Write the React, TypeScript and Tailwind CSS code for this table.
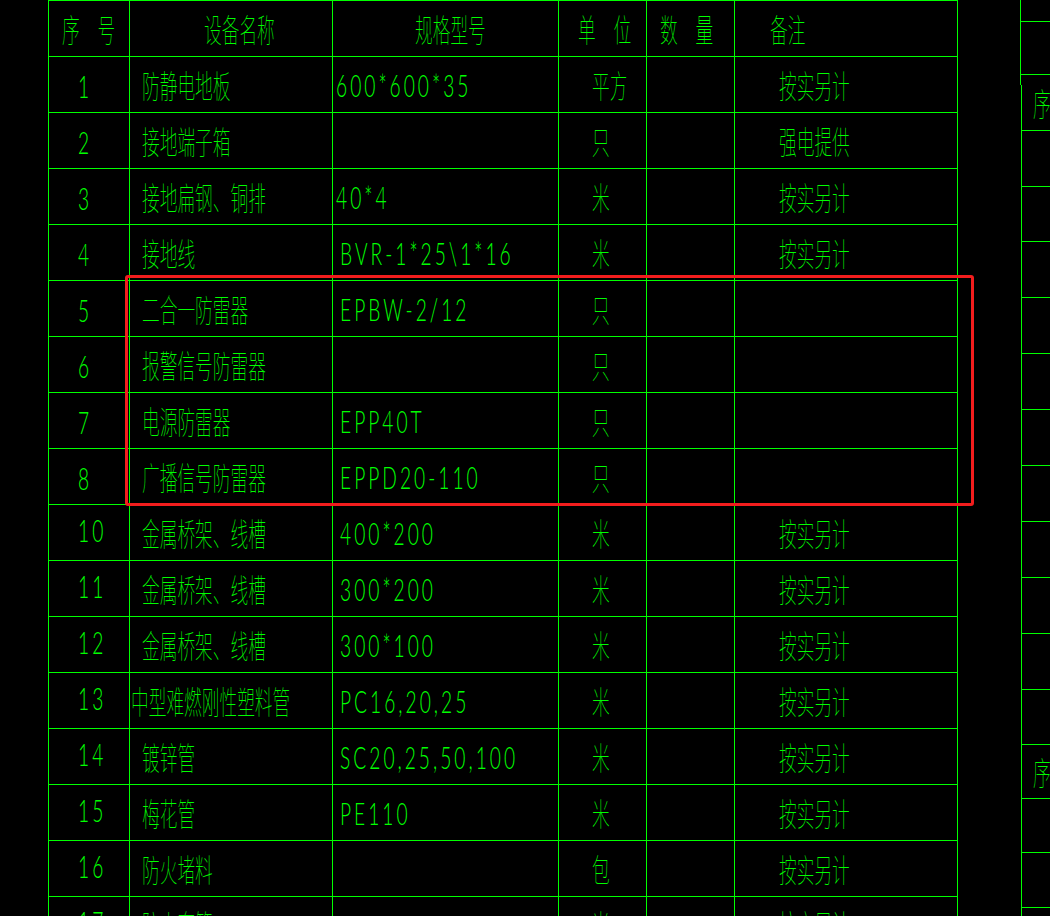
import type { ReactNode } from "react";

// CAD-style equipment list: green lines on black, with a red markup box.

type Row = [string, string, string, string, string, string];

const rows: Row[] = [
  ["1", "防静电地板", "600*600*35", "平方", "", "按实另计"],
  ["2", "接地端子箱", "", "只", "", "强电提供"],
  ["3", "接地扁钢、铜排", "40*4", "米", "", "按实另计"],
  ["4", "接地线", "BVR-1*25\\1*16", "米", "", "按实另计"],
  ["5", "二合一防雷器", "EPBW-2/12", "只", "", ""],
  ["6", "报警信号防雷器", "", "只", "", ""],
  ["7", "电源防雷器", "EPP40T", "只", "", ""],
  ["8", "广播信号防雷器", "EPPD20-110", "只", "", ""],
  ["10", "金属桥架、线槽", "400*200", "米", "", "按实另计"],
  ["11", "金属桥架、线槽", "300*200", "米", "", "按实另计"],
  ["12", "金属桥架、线槽", "300*100", "米", "", "按实另计"],
  ["13", "中型难燃刚性塑料管", "PC16,20,25", "米", "", "按实另计"],
  ["14", "镀锌管", "SC20,25,50,100", "米", "", "按实另计"],
  ["15", "梅花管", "PE110", "米", "", "按实另计"],
  ["16", "防火堵料", "", "包", "", "按实另计"],
  ["17", "防火套管", "", "米", "", "按实另计"],
];

const cols = "grid grid-cols-[81px_203px_226px_88px_88px_223px]";
const cell =
  "flex h-14 items-center overflow-visible whitespace-nowrap border-r border-b border-[#00ff00]";
// vertical nudges per kind of text
const cnCell = `${cell} pb-[2px]`;
const specCell = `${cell} pt-px`;

function Cn({ children }: { children: ReactNode }) {
  return (
    <span className="inline-block origin-left scale-x-[0.553] font-['Noto_Sans_CJK_SC',sans-serif] text-[32px] font-thin leading-none text-[#00ff00]">
      {children}
    </span>
  );
}

function Lt({ children }: { children: ReactNode }) {
  return (
    <span className="inline-block origin-left scale-x-[0.6] font-['Lato','Roboto',sans-serif] text-[32px] font-light leading-none tracking-[5px] text-[#00ff00]">
      {children}
    </span>
  );
}

function HeaderRow() {
  return (
    <div className={cols}>
      <div className={`${cnCell} pl-[13px]`}>
        <Cn>序　号</Cn>
      </div>
      <div className={`${cnCell} pl-[74px]`}>
        <Cn>设备名称</Cn>
      </div>
      <div className={`${cnCell} pl-[82px]`}>
        <Cn>规格型号</Cn>
      </div>
      <div className={`${cnCell} pl-[19px]`}>
        <Cn>单　位</Cn>
      </div>
      <div className={`${cnCell} pl-[13px]`}>
        <Cn>数　量</Cn>
      </div>
      <div className={`${cnCell} pl-[35px]`}>
        <Cn>备注</Cn>
      </div>
    </div>
  );
}

function DataRow({ row, upper }: { row: Row; upper: boolean }) {
  const [no, name, spec, unit, qty, note] = row;
  const longName = name.length > 8;
  const tightSpec = spec.startsWith("600") || spec.startsWith("40*");
  return (
    <div className={cols}>
      <div className={`${cell} pl-[29px] ${upper ? "pt-[3px]" : "pb-[5px]"}`}>
        <Lt>{no}</Lt>
      </div>
      <div className={`${cnCell} ${longName ? "pl-px" : "pl-[12px]"}`}>
        <Cn>{name}</Cn>
      </div>
      <div className={`${specCell} ${tightSpec ? "pl-[3px]" : "pl-[7px]"}`}>
        {spec && <Lt>{spec}</Lt>}
      </div>
      <div className={`${cnCell} pl-[33px]`}>
        <Cn>{unit}</Cn>
      </div>
      <div className={cell}>{qty}</div>
      <div className={`${cnCell} pl-[44px]`}>
        {note && <Cn>{note}</Cn>}
      </div>
    </div>
  );
}

const sideRows = [46, 56, 55, 56, 56, 56, 56, 56, 56, 56, 56, 55, 54, 54, 55];

export default function App() {
  return (
    <div className="relative h-[916px] w-[1050px] overflow-hidden bg-black">
      <div className="flex">
        {/* main table */}
        <div className="ml-[48px] w-[910px] border-l border-t border-[#00ff00]">
          <HeaderRow />
          {rows.map((r, i) => (
            <DataRow key={r[0]} row={r} upper={i < 8} />
          ))}
        </div>

        {/* neighbouring sheet, cut off at the right edge */}
        <div className="ml-[62px] flex w-[30px] flex-col">
          <div className="flex h-[85px] flex-col border-l border-[#00ff00]">
            <div className="h-[22px] border-b border-[#00ff00]" />
            <div className="h-[53px] border-b border-[#00ff00]" />
          </div>
          <div className="ml-px flex h-[831px] flex-col border-l border-[#00ff00]">
            {sideRows.map((h, i) => (
              <div
                key={i}
                style={{ height: h }}
                className={`flex shrink-0 items-center whitespace-nowrap border-b border-[#00ff00] pl-[11px] ${
                  i === 0 ? "pb-[11px]" : "pb-[2px]"
                }`}
              >
                {(i === 0 || i === 12) && <Cn>序</Cn>}
              </div>
            ))}
          </div>
        </div>
      </div>

      {/* red markup box */}
      <div className="absolute left-[125px] top-[275px] h-[231px] w-[849px] rounded-[3px] border-[3px] border-[#f21d1d]" />
    </div>
  );
}
